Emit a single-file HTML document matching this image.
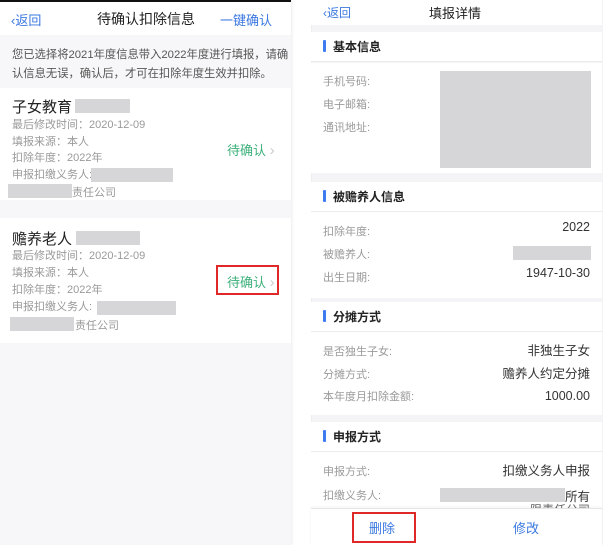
<!DOCTYPE html>
<html><head><meta charset="utf-8"><style>
*{margin:0;padding:0;box-sizing:border-box}
body{width:603px;height:545px;background:#fff;position:relative;overflow:hidden;font-family:"Liberation Sans","Noto Sans CJK SC",sans-serif;}
.a{position:absolute;white-space:nowrap}
.g{color:#9a9a9a;font-size:11px}
.k{color:#333;font-size:12px}
.blur{position:absolute;background:#d6d6d8}
.hd{position:absolute;left:311px;width:291px;background:#fff;border-bottom:1px solid #ececec;height:30px}
.hd span{position:absolute;left:12px;top:8px;width:3px;height:12px;background:#3d7cf0;border-radius:1px}
.hd b{position:absolute;left:22px;top:6px;font-size:12px;color:#222}
.card{position:absolute;left:311px;width:291px;background:#fff}
</style></head><body>
<!-- left panel -->
<div class="a" style="left:0;top:0;width:291px;height:545px;background:#f7f7f9;box-shadow:1px 0 3px rgba(0,0,0,.08)"></div>
<div class="a" style="left:0;top:0;width:291px;height:2px;background:#111"></div>
<div class="a" style="left:0;top:2px;width:291px;height:33px;background:#fff"></div>
<div class="a" style="left:11px;top:10px;font-size:13px;color:#3a78e0">&#8249;返回</div>
<div class="a" style="left:97px;top:9px;font-size:14px;color:#222">待确认扣除信息</div>
<div class="a" style="left:220px;top:10px;font-size:13px;color:#3a78e0">一键确认</div>
<div class="a" style="left:12px;top:46px;font-size:11.3px;color:#555;line-height:19px">您已选择将2021年度信息带入2022年度进行填报，请确<br>认信息无误，确认后，才可在扣除年度生效并扣除。</div>
<div class="a" style="left:0;top:88px;width:291px;height:112px;background:#fff"></div>
<div class="a" style="left:12px;top:96px;font-size:15px;color:#222">子女教育</div>
<div class="blur" style="left:75px;top:99px;width:55px;height:14px"></div>
<div class="a g" style="left:12px;top:117px;line-height:16.5px">最后修改时间：2020-12-09<br>填报来源：本人<br>扣除年度：2022年<br>申报扣缴义务人:</div>
<div class="blur" style="left:91px;top:168px;width:82px;height:14px"></div>
<div class="blur" style="left:8px;top:184px;width:64px;height:14px"></div>
<div class="a g" style="left:72px;top:184px">责任公司</div>
<div class="a" style="left:227px;top:140px;font-size:13px;color:#3cb07a">待确认 <span style="color:#ccc;font-size:15px">&#8250;</span></div>
<div class="a" style="left:0;top:218px;width:291px;height:125px;background:#fff"></div>
<div class="a" style="left:12px;top:228px;font-size:15px;color:#222">赡养老人</div>
<div class="blur" style="left:76px;top:231px;width:64px;height:14px"></div>
<div class="a g" style="left:12px;top:248px;line-height:17px">最后修改时间：2020-12-09<br>填报来源：本人<br>扣除年度：2022年<br>申报扣缴义务人:</div>
<div class="blur" style="left:97px;top:301px;width:79px;height:14px"></div>
<div class="blur" style="left:10px;top:317px;width:64px;height:14px"></div>
<div class="a g" style="left:75px;top:317px">责任公司</div>
<div class="a" style="left:216px;top:265px;width:63px;height:30px;border:2px solid #e02828"></div>
<div class="a" style="left:227px;top:272px;font-size:13px;color:#3cb07a">待确认 <span style="color:#ccc;font-size:15px">&#8250;</span></div>

<!-- right panel -->
<div class="a" style="left:311px;top:0;width:292px;height:545px;background:#f4f4f6;border-left:1px solid #eee"></div>
<div class="card" style="top:0;height:25px"></div>
<div class="a" style="left:323px;top:4px;font-size:12px;color:#3a78e0">&#8249;返回</div>
<div class="a" style="left:429px;top:3px;font-size:13px;color:#222">填报详情</div>

<div class="hd" style="top:32px"><span></span><b>基本信息</b></div>
<div class="card" style="top:63px;height:110px"></div>
<div class="a g" style="left:323px;top:71px;line-height:23px">手机号码:<br>电子邮箱:<br>通讯地址:</div>
<div class="blur" style="left:440px;top:71px;width:151px;height:97px"></div>

<div class="hd" style="top:182px"><span></span><b>被赡养人信息</b></div>
<div class="card" style="top:212px;height:86px"></div>
<div class="a g" style="left:323px;top:221px;line-height:23px">扣除年度:<br>被赡养人:<br>出生日期:</div>
<div class="a k" style="right:13px;top:220px;font-size:12.5px">2022</div>
<div class="blur" style="left:513px;top:246px;width:78px;height:14px"></div>
<div class="a k" style="right:13px;top:266px;font-size:12.5px">1947-10-30</div>

<div class="hd" style="top:302px"><span></span><b>分摊方式</b></div>
<div class="card" style="top:332px;height:83px"></div>
<div class="a g" style="left:323px;top:341px;line-height:22.5px">是否独生子女:<br>分摊方式:<br>本年度月扣除金额:</div>
<div class="a k" style="right:13px;top:340px;text-align:right;line-height:22.5px;font-size:12.5px">非独生子女<br>赡养人约定分摊<br>1000.00</div>

<div class="hd" style="top:422px"><span></span><b>申报方式</b></div>
<div class="card" style="top:452px;height:56px"></div>
<div class="a g" style="left:323px;top:460px;line-height:24px">申报方式:<br>扣缴义务人:</div>
<div class="a k" style="right:13px;top:460px;font-size:12.5px">扣缴义务人申报</div>
<div class="blur" style="left:440px;top:488px;width:125px;height:14px"></div>
<div class="a k" style="right:13px;top:486px;font-size:12.5px">所有</div>
<div class="a k" style="right:13px;top:501px;color:#666">限责任公司</div>

<div class="card" style="top:508px;height:37px;border-top:1px solid #e5e5e5;box-shadow:0 -1px 3px rgba(0,0,0,.05)"></div>
<div class="a" style="left:352px;top:512px;width:64px;height:31px;border:2px solid #e02828"></div>
<div class="a" style="left:369px;top:518px;font-size:13px;color:#3a78e0">删除</div>
<div class="a" style="left:513px;top:518px;font-size:13px;color:#3a78e0">修改</div>
</body></html>
